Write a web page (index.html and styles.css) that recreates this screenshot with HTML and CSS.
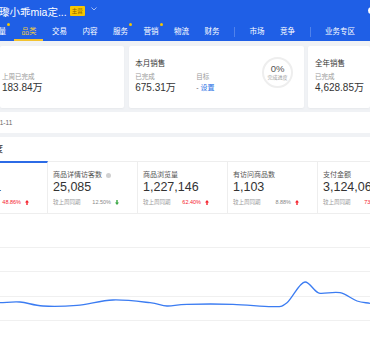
FILE: index.html
```html
<!DOCTYPE html>
<html lang="zh">
<head>
  <meta charset="utf-8">
  <title>商品概况</title>
  <link rel="stylesheet" href="styles.css">
</head>
<body>
  <div class="header">
    <div class="top-row">
      <span class="shop-name">瓈小乖mia定...</span>
      <span class="badge">主营</span>
      <svg class="chevron" width="6" height="4" viewBox="0 0 6 4"><path d="M0.5 0.5 L3 3 L5.5 0.5" fill="none" stroke="rgba(255,255,255,0.6)" stroke-width="1"/></svg>
      <span class="avatar"></span>
    </div>
    <div class="nav">
      <span class="nav-item first">流量<i class="dot"></i></span>
      <span class="nav-item active">品类</span>
      <span class="nav-item">交易</span>
      <span class="nav-item">内容</span>
      <span class="nav-item">服务<i class="dot"></i></span>
      <span class="nav-item">营销<i class="dot"></i></span>
      <span class="nav-item">物流</span>
      <span class="nav-item">财务</span>
      <span class="nav-sep"></span>
      <span class="nav-item">市场</span>
      <span class="nav-item">竞争</span>
      <span class="nav-sep"></span>
      <span class="nav-item">业务专区</span>
      <span class="nav-sep"></span>
    </div>
  </div>

  <div class="main">
    <div class="cards">
      <div class="card card-week">
        <div class="card-title">&nbsp;</div>
        <div class="card-sub">上周已完成</div>
        <div class="card-value">183.84万</div>
      </div>
      <div class="card card-month">
        <div class="stat">
          <div class="card-title">本月销售</div>
          <div class="card-sub">已完成</div>
          <div class="card-value">675.31万</div>
        </div>
        <div class="stat">
          <div class="card-title">&nbsp;</div>
          <div class="card-sub">目标</div>
          <div class="target">- <a class="link">设置</a></div>
        </div>
        <div class="progress">
          <div class="progress-num">0%</div>
          <div class="progress-label">完成进度</div>
        </div>
      </div>
      <div class="card card-year">
        <div class="card-title">全年销售</div>
        <div class="card-sub">已完成</div>
        <div class="card-value">4,628.85万</div>
      </div>
    </div>

    <div class="date-bar"><span class="date">2023-11-11</span></div>

    <div class="section">
      <div class="section-title"><span>商品维度</span></div>
      <div class="metrics">
        <div class="metric active">
          <div class="metric-label">商品访客数</div>
          <div class="metric-value">12,941</div>
          <div class="metric-compare">
            <span>较上周同期</span>
            <span class="rate up">48.86%<svg class="arrow" width="4" height="5" viewBox="0 0 4 5"><path d="M2 0 L4 2.4 L2.7 2.4 L2.7 5 L1.3 5 L1.3 2.4 L0 2.4 Z" fill="#f5222d"/></svg></span>
          </div>
        </div>
        <div class="metric">
          <div class="metric-label">商品详情访客数<i class="info"></i></div>
          <div class="metric-value">25,085</div>
          <div class="metric-compare">
            <span>较上周同期</span>
            <span class="rate">12.50%<svg class="arrow" width="4" height="5" viewBox="0 0 4 5"><path d="M2 5 L4 2.6 L2.7 2.6 L2.7 0 L1.3 0 L1.3 2.6 L0 2.6 Z" fill="#3aa845"/></svg></span>
          </div>
        </div>
        <div class="metric">
          <div class="metric-label">商品浏览量</div>
          <div class="metric-value">1,227,146</div>
          <div class="metric-compare">
            <span>较上周同期</span>
            <span class="rate up">62.40%<svg class="arrow" width="4" height="5" viewBox="0 0 4 5"><path d="M2 0 L4 2.4 L2.7 2.4 L2.7 5 L1.3 5 L1.3 2.4 L0 2.4 Z" fill="#f5222d"/></svg></span>
          </div>
        </div>
        <div class="metric">
          <div class="metric-label">有访问商品数</div>
          <div class="metric-value">1,103</div>
          <div class="metric-compare">
            <span>较上周同期</span>
            <span class="rate">8.88%<svg class="arrow" width="4" height="5" viewBox="0 0 4 5"><path d="M2 0 L4 2.4 L2.7 2.4 L2.7 5 L1.3 5 L1.3 2.4 L0 2.4 Z" fill="#f5222d"/></svg></span>
          </div>
        </div>
        <div class="metric">
          <div class="metric-label">支付金额</div>
          <div class="metric-value">3,124,066</div>
          <div class="metric-compare">
            <span>较上周同期</span>
            <span class="rate up">7301.25%</span>
          </div>
        </div>
      </div>

      <svg class="chart" width="370" height="127" viewBox="0 0 370 127">
        <g stroke="#f0f0f0" stroke-width="1">
          <line x1="0" y1="33.5" x2="370" y2="33.5"/>
          <line x1="0" y1="57.5" x2="370" y2="57.5"/>
          <line x1="0" y1="82.5" x2="370" y2="82.5"/>
          <line x1="0" y1="106.5" x2="370" y2="106.5"/>
        </g>
        <path fill="none" stroke="#3b7cf2" stroke-width="1.3" d="M0,88.7 C6.7,88.5 12.8,87.45 20,88 C27.2,88.55 33.5,91.45 43,92 C52.5,92.55 65.3,92.3 77,91.3 C88.7,90.3 100.8,86.43 113,86 C125.2,85.57 141,87.7 150,88.7 C159,89.7 160.8,91.73 167,92 C173.2,92.27 176,90.58 187,90.3 C198,90.02 218.7,89.9 233,90.3 C247.3,90.7 264,92.97 273,92.7 C282,92.43 281.7,92.8 287,88.7 C292.3,84.6 299.5,68 305,68 C310.5,68 314.2,78.8 320,79.3 C325.8,79.8 333.8,77.4 340,78.7 C346.2,80 352,85.2 357,87 C362,88.8 365.7,88.53 370,89.3"/>
      </svg>
    </div>
  </div>
</body>
</html>
```

FILE: styles.css
```css
* {
  box-sizing: border-box;
}

body {
  margin: 0;
  width: 370px;
  height: 341px;
  overflow: hidden;
  font-family: "Liberation Sans", "Noto Sans CJK SC", sans-serif;
  color: #333;
  background: #f0f2f5;
}

/* header */
.header {
  height: 41px;
  background: #1f5fe6;
  color: #fff;
  overflow: hidden;
}

.top-row {
  display: flex;
  align-items: center;
  height: 22px;
  white-space: nowrap;
}

.shop-name {
  margin-left: -1px;
  font-size: 10.5px;
}

.badge {
  margin-left: 3px;
  padding: 1px 2px;
  font-size: 5.5px;
  line-height: 8px;
  color: #8a5a00;
  background: #f7c600;
  border-radius: 1px;
}

.chevron {
  margin-left: 6px;
  margin-top: -4px;
}

.avatar {
  margin-left: auto;
  margin-right: -5px;
  margin-top: -2px;
  width: 7px;
  height: 7px;
  border-radius: 50%;
  background: #fff;
}

.nav {
  display: flex;
  align-items: center;
  gap: 15.5px;
  height: 19px;
  white-space: nowrap;
}

.nav-item {
  position: relative;
  font-size: 7.5px;
  line-height: 19px;
  color: #fff;
}

.nav-item.first {
  margin-left: -9px;
}

.nav-item.active {
  color: #f2cc3d;
}

.nav-item.active::after {
  content: "";
  position: absolute;
  left: -8px;
  right: -6px;
  bottom: 0;
  height: 2px;
  background: #f2c230;
}

.dot {
  position: absolute;
  right: -4px;
  top: 1px;
  width: 3px;
  height: 3px;
  border-radius: 50%;
  background: #f7c600;
}

.nav-sep {
  width: 1px;
  height: 10px;
  margin: 0 -1px;
  background: rgba(255, 255, 255, 0.22);
}

/* cards */
.main {
  padding-top: 5px;
}

.cards {
  display: flex;
  gap: 4px;
  height: 62px;
}

.card {
  background: #fff;
  border-radius: 2px;
  box-shadow: 0 1px 2px rgba(0, 0, 0, 0.04);
  padding: 13px 6px 0;
  white-space: nowrap;
}

.card-week {
  width: 131px;
  margin-right: 1px;
  padding-left: 2px;
}

.card-month {
  width: 184px;
  display: flex;
  align-items: flex-start;
  padding-right: 11px;
}

.card-month .stat {
  width: 61px;
}

.card-year {
  flex: 1;
  padding-left: 7px;
}

.card-title {
  font-size: 7.5px;
  line-height: 10px;
  color: #333;
}

.card-sub {
  margin-top: 3px;
  font-size: 6.5px;
  line-height: 9px;
  color: #999;
}

.card-value {
  margin-top: 1px;
  font-size: 10px;
  line-height: 12px;
  color: #333;
}

.target {
  margin-top: 1px;
  font-size: 7px;
  line-height: 12px;
  color: #666;
}

.link {
  color: #1f6fe5;
}

.progress {
  margin-left: auto;
  margin-top: -2px;
  width: 31px;
  height: 31px;
  border: 2px solid #eeeeee;
  border-radius: 50%;
  display: flex;
  flex-direction: column;
  align-items: center;
  justify-content: center;
}

.progress-num {
  font-size: 9.5px;
  line-height: 10px;
  color: #555;
}

.progress-label {
  font-size: 5px;
  line-height: 7px;
  color: #999;
}

/* date bar */
.date-bar {
  margin-top: 4px;
  height: 21px;
  background: #fff;
  display: flex;
  align-items: center;
  overflow: hidden;
  white-space: nowrap;
}

.date {
  margin-left: -20px;
  font-size: 6.5px;
  color: #666;
}

/* metrics section */
.section {
  margin-top: 4px;
  background: #fff;
  overflow: hidden;
}

.section-title {
  padding-top: 6px;
  height: 24px;
  font-size: 9px;
  line-height: 12px;
  color: #333;
  white-space: nowrap;
}

.section-title span {
  margin-left: -33px;
}

.metrics {
  display: flex;
  white-space: nowrap;
}

.metric {
  flex: none;
  width: 90px;
  padding: 8px 18px 7px 5px;
  border-top: 1px solid #eeeeee;
  border-right: 1px solid #eeeeee;
  border-bottom: 1px solid #eeeeee;
}

.metric:first-child {
  margin-left: -42px;
}

.metric.active {
  border-top: 2px solid #2c6be6;
  padding-top: 7px;
}

.metric-label {
  display: flex;
  align-items: center;
  font-size: 7px;
  line-height: 10px;
  color: #555;
}

.info {
  margin-left: 4px;
  width: 5px;
  height: 5px;
  border-radius: 50%;
  background: #d0d0d0;
}

.metric-value {
  margin-top: 0;
  font-size: 12.5px;
  line-height: 15px;
  color: #333;
}

.metric-compare {
  display: flex;
  justify-content: space-between;
  align-items: center;
  margin-top: 3px;
  font-size: 5.5px;
  line-height: 8px;
  color: #999;
}

.rate {
  display: flex;
  align-items: center;
  gap: 4px;
  color: #888;
}

.rate.up {
  color: #f5222d;
}

.chart {
  display: block;
}
```
